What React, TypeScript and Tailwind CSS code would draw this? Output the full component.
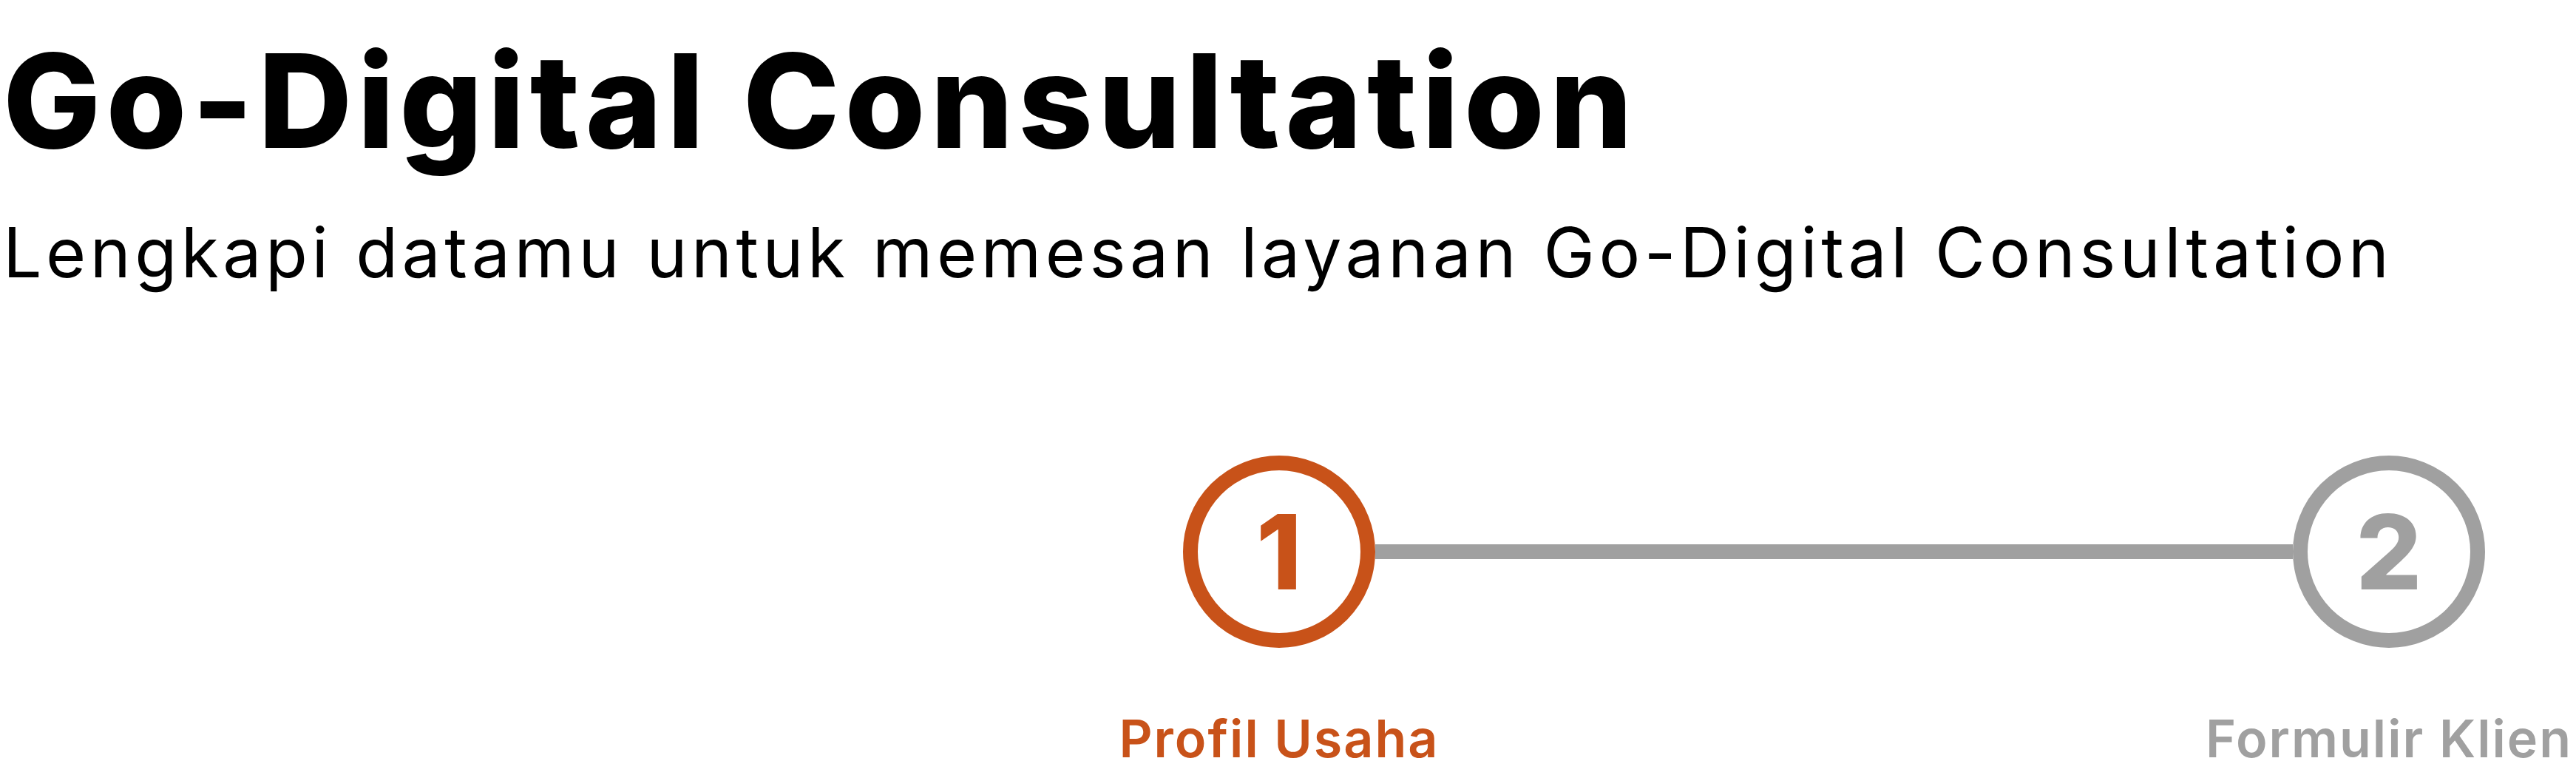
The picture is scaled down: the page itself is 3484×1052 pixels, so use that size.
import React from 'react'

const font = { fontFamily: 'Inter, "Noto Sans", sans-serif' }

const Step = ({ n, label, active }: { n: string; label: string; active?: boolean }) => {
  return (
    <div className="flex flex-col items-center w-[260px] shrink-0">
      <div
        className={`w-[260px] h-[260px] rounded-full border-[20px] flex items-center justify-center bg-white ${
          active ? 'border-[#c85219] text-[#c85219]' : 'border-[#a0a0a0] text-[#a0a0a0]'
        }`}
      >
        <span className="text-[140px] font-extrabold leading-none">{n}</span>
      </div>
      <p
        className={`mt-[70px] whitespace-nowrap text-[70px] font-semibold leading-[1.5] tracking-[2px] ${
          active ? 'text-[#c85219]' : 'text-[#a0a0a0]'
        }`}
      >
        {label}
      </p>
    </div>
  )
}

export default function App() {
  return (
    <div className="w-screen h-screen overflow-hidden bg-white text-black" style={font}>
      <div className="pl-[4px]">
        <h1 className="pt-[48px] text-[176px] font-extrabold leading-none tracking-[7px]">Go-Digital Consultation</h1>
        <p className="mt-[71px] text-[93px] font-normal leading-none tracking-[5.5px]">
          Lengkapi datamu untuk memesan layanan Go-Digital Consultation
        </p>
      </div>

      <div className="mt-[228px] flex items-start pl-[1600px]">
        <Step n="1" label="Profil Usaha" active />
        <div className="mt-[120px] h-[20px] w-[1241px] shrink-0 bg-[#a0a0a0]" />
        <Step n="2" label="Formulir Klien" />
      </div>
    </div>
  )
}
